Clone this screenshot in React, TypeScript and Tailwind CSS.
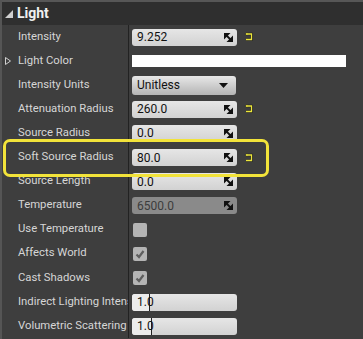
import React from 'react'

const SpinIcon = () => (
  <svg width="9" height="9" viewBox="0 0 9 9" className="shrink-0">
    <polygon points="0,0 6.5,0 0,6.5" fill="#111" />
    <polygon points="9,9 2.5,9 9,2.5" fill="#111" />
    <path d="M1.5 1.5 L7.5 7.5" stroke="#111" strokeWidth="1.8" />
  </svg>
)

const ResetArrow = () => (
  <svg width="10" height="10" viewBox="0 0 10 10" className="ml-[7px] shrink-0">
    <path d="M3 2 H7.5 V7.5 H2" fill="none" stroke="#1e1e1e" strokeWidth="2.6" />
    <path d="M0.6 2 L3.6 -0.2 L3.6 4.2 Z" fill="#1e1e1e" />
    <path d="M3 2 H7.5 V7.5 H2" fill="none" stroke="#ece63c" strokeWidth="1.3" />
    <path d="M1.3 2 L3.3 0.6 L3.3 3.4 Z" fill="#ece63c" />
  </svg>
)

function NumBox({ value, disabled, slider }: { value: string; disabled?: boolean; slider?: number }) {
  return (
    <div
      className={`relative flex items-center h-[17px] w-[105px] rounded-[3px] pl-[5px] pr-[4px] overflow-hidden ${
        disabled ? 'bg-[#8a8a8a] text-[#3c3c3c]' : 'bg-gradient-to-b from-[#e6e6e6] to-[#d2d2d2] text-[#111]'
      }`}
    >
      {slider !== undefined && (
        <div className="absolute left-0 top-0 bottom-0 bg-[#ececec] border-r border-[#222]" style={{ width: slider }} />
      )}
      <span className="relative flex-1 text-[12px] leading-none">{value}</span>
      {slider === undefined && <SpinIcon />}
    </div>
  )
}

const Check = ({ checked }: { checked?: boolean }) => (
  <div className="ml-[1px] flex items-center justify-center w-[14px] h-[14px] rounded-[2px] bg-[#b4b4b4]">
    {checked && (
      <svg width="10" height="10" viewBox="0 0 10 10">
        <path d="M1.5 5.5 L4 8 L8.5 2" fill="none" stroke="#5e5e5e" strokeWidth="2.2" />
      </svg>
    )}
  </div>
)

type Row = { label: string; value: React.ReactNode; expand?: boolean }

const rows: Row[] = [
  { label: 'Intensity', value: <><NumBox value="9.252" /><ResetArrow /></> },
  { label: 'Light Color', expand: true, value: <div className="h-[12px] w-[214px] bg-white" /> },
  {
    label: 'Intensity Units',
    value: (
      <div className="flex items-center h-[19px] w-[104px] rounded-[3px] bg-gradient-to-b from-[#e8e8e8] to-[#b4b4b4] pl-[5px] pr-[8px] text-[12px] text-[#111]">
        <span className="flex-1">Unitless</span>
        <svg width="9" height="5" viewBox="0 0 9 5">
          <polygon points="0,0 9,0 4.5,5" fill="#111" />
        </svg>
      </div>
    ),
  },
  { label: 'Attenuation Radius', value: <><NumBox value="260.0" /><ResetArrow /></> },
  { label: 'Source Radius', value: <NumBox value="0.0" /> },
  { label: 'Soft Source Radius', value: <><NumBox value="80.0" /><ResetArrow /></> },
  { label: 'Source Length', value: <NumBox value="0.0" /> },
  { label: 'Temperature', value: <NumBox value="6500.0" disabled /> },
  { label: 'Use Temperature', value: <Check /> },
  { label: 'Affects World', value: <Check checked /> },
  { label: 'Cast Shadows', value: <Check checked /> },
  { label: 'Indirect Lighting Intensity', value: <NumBox value="1.0" slider={18} /> },
  { label: 'Volumetric Scattering Intensity', value: <NumBox value="1.0" slider={20} /> },
]

export default function App() {
  return (
    <div className="relative w-[363px] h-[339px] overflow-hidden bg-[#3e3e3e] border-l-2 border-[#555] font-['Roboto',sans-serif]">
      <div className="h-[2px] bg-[#575757]" />
      {/* Category header */}
      <div className="flex items-center h-[23px] bg-[#2f2f2f] pl-[3px] gap-[4px]">
        <svg width="8" height="8" viewBox="0 0 8 8">
          <polygon points="8,0 8,8 0,8" fill="#d0d0d0" />
        </svg>
        <span className="text-[14px] font-bold text-[#f0f0f0]">Light</span>
      </div>

      {/* Property rows */}
      <div className="flex flex-col">
        {rows.map((row) => (
          <div key={row.label} className="flex h-[24.1px]">
            <div className="relative flex items-center w-[127px] shrink-0 border-r border-[#222] pl-[16px] overflow-hidden whitespace-nowrap">
              {row.expand && (
                <svg width="6" height="8" viewBox="0 0 6 8" className="absolute left-[3px]">
                  <polygon points="0.5,0.5 5.5,4 0.5,7.5" fill="none" stroke="#d0d0d0" strokeWidth="1" />
                </svg>
              )}
              <span className="text-[11.3px] text-[#d6d6d6]">{row.label}</span>
            </div>
            <div className="flex items-center pl-[3px]">{row.value}</div>
          </div>
        ))}
      </div>

      {/* Highlight around Soft Source Radius */}
      <div className="absolute left-[1px] top-[139px] w-[266px] h-[38px] rounded-[7px] border-[3px] border-[#f2e33a]" />
    </div>
  )
}
